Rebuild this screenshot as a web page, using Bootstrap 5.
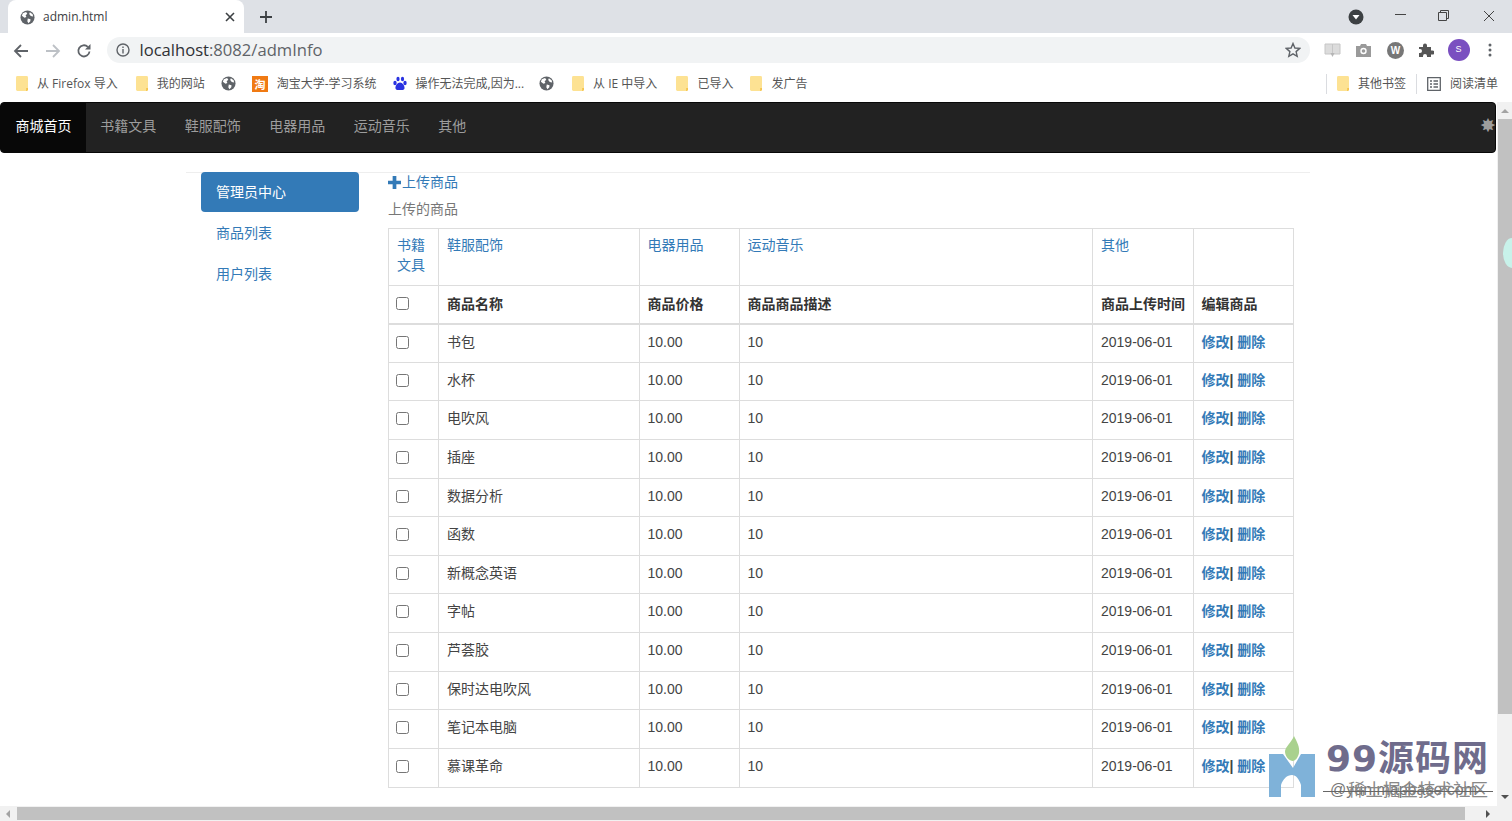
<!DOCTYPE html>
<html lang="zh-CN">
<head>
<meta charset="utf-8">
<title>admin.html</title>
<link rel="stylesheet" href="https://cdn.jsdelivr.net/npm/bootstrap@5.3.0/dist/css/bootstrap.min.css">
<style>
html,body{height:821px;overflow:hidden;background:#fff}
body{font-family:"Liberation Sans","Noto Sans CJK SC",sans-serif;font-size:14px;color:#333;position:relative}
a{text-decoration:none;color:#337ab7}
.tabstrip{height:33px;background:#dee1e6;padding-left:8px}
.browser-tab{width:236px;height:33px;background:#fff;border-radius:8px 8px 0 0;padding:1px 9px 0 12px;font-family:"Open Sans","Noto Sans",sans-serif;font-size:12px;color:#3c4043}
.tab-title{margin-left:8px}
.new-tab{margin-left:15px}
.winbtns{margin-left:auto}
.win-drop{margin-right:15px;margin-top:4px}
.win-btn{width:43.5px;text-align:center}
.win-restore{margin-right:2px}
.win-row{padding-right:1px;margin-top:-3px}
.toolbar{height:34px;padding-left:13px;background:#fff}
.tool-btn{width:31.5px}
.urlbar{width:1203px;height:26px;margin-left:-1px;background:#f1f3f4;border-radius:13px;padding:0 9px;font-family:"Open Sans","Noto Sans",sans-serif;font-size:16.6px;color:#5f6368}
.urlhost{color:#303134}
.url-text{margin-left:10px}
.ext-row{margin-left:14px;gap:14.5px}
.avatar{width:22px;height:22px;border-radius:50%;background:#7a4fc0;color:#fff;font-size:9px;margin-left:-1px}
.dots{margin-left:4px}
.bookmarks{height:35px;padding:0 14px 2px 16px;background:#fff;font-family:"Open Sans","Noto Sans CJK SC",sans-serif;font-size:12px;color:#555;gap:17px}
.bm{gap:9px;white-space:nowrap}
.bm-sep{width:1px;height:20px;background:#dadce0}
.bm-right{margin-left:auto;gap:10px}
.shift-plus1{margin-left:1px}
.shift-plus2{margin-left:2px}
.shift-minus1{margin-left:-1px}
.shift-minus2{margin-left:-2px}
.site-nav{height:51px;width:1496px;background:#222;border:1px solid #080808;border-radius:4px;padding:0;flex-wrap:nowrap;justify-content:flex-start;align-items:flex-start}
.site-nav .nav-link{color:#9d9d9d;padding:0 14.25px;line-height:47px}
.site-nav .brand-link{color:#fff;background:#080808;padding:0 14.5px 2px;line-height:47px;border-radius:3px 0 0 3px}
.gear-mark{position:absolute;right:16px;top:116px;color:#9d9d9d;font-size:19px;line-height:20px}
.page-wrap{width:1124px;margin-left:186px;border-top:1px solid #eee;margin-top:19px;padding:0 15px;height:640px;align-items:flex-start;gap:29px}
.side-col{width:158px;margin-top:-1px}
.side-col .nav-link{color:#337ab7;padding:10px 15px;line-height:20px;border-radius:4px;margin-bottom:1px}
.side-col .nav-link.active{background:#337ab7;color:#fff;height:40px;padding-top:9.500px}
.main-col{width:906px}
.upload-link{margin-top:-1px;height:20px;font-size:14px;line-height:20px}
.upload-plus{margin-right:1px}
.sub-title{color:#777;line-height:20px;margin-top:7px;margin-bottom:9px}
.goods{border-collapse:collapse;width:905px;table-layout:fixed;margin:0;--bs-table-border-color:#ddd;color:#444}
.goods td,.goods th{border:1px solid #ddd;padding:8px;line-height:20px;vertical-align:top;font-weight:400;color:#444}
.goods th{font-weight:700;color:#333;padding-top:8px;height:38px;white-space:nowrap}
.goods .head-row th{border-bottom-width:2px}
.goods .cat-row td{height:57px;padding-top:6px}
.goods tbody td{height:38.65px;padding-top:7px;padding-bottom:0}
.goods tbody td.edit-links{font-weight:700}
.chk{width:13px;height:13px;margin:4px 0 0 -1px;display:block}
.goods th .chk{margin-top:3px}
.footer-bar{position:absolute;left:0;bottom:0;width:1497px;height:15px;background:#f1f1f1}
.h-thumb{position:absolute;left:17px;top:1px;width:1448px;height:13px;background:#c1c1c1}
.v-bar{position:absolute;right:0;top:102px;width:15px;height:719px;background:#f1f1f1}
.v-thumb{position:absolute;left:1px;top:17px;width:14px;height:595px;background:#c1c1c1}
.tri{position:absolute;width:0;height:0;border-style:solid;border-color:transparent}
.tri-up{left:4px;top:7px;border-width:0 4px 4px;border-bottom-color:#a3a3a3}
.tri-down{left:4px;top:693px;border-width:4px 4px 0;border-top-color:#505050}
.tri-left{left:6px;top:4px;border-width:4px 4px 4px 0;border-right-color:#a3a3a3}
.tri-right{right:7px;top:4px;border-width:4px 0 4px 4px;border-left-color:#505050}
.teal-blob{position:absolute;right:-9px;top:136px;width:18px;height:30px;border-radius:50%;background:#c8f2ea}
.wm{position:absolute;left:1268px;top:736px;width:230px;height:66px}
.wm-logo{position:absolute;left:0;top:0}
.wm-title{position:absolute;left:58px;top:0;font-family:"DejaVu Sans","Noto Sans CJK SC",sans-serif;font-weight:700;font-size:36px;line-height:46px;color:#6f6c8c;letter-spacing:1px;white-space:nowrap}
.wm-a,.wm-b{position:absolute;left:62px;top:43px;font-size:16px;line-height:22px;color:#777;white-space:nowrap}
.wm-b{left:80px;font-size:17.500px;color:#888}
.wm-strike{position:absolute;left:55px;top:55px;width:170px;height:1px;background:#666}
</style>
</head>
<body>
<svg width="0" height="0" class="d-block" style="position:absolute">
<defs>
<symbol id="globe" viewBox="0 0 16 16"><circle cx="8" cy="8" r="7.5" fill="#5f6368"/><path d="M3 3.5 6.5 2.2 7.8 4 6 5.5 6.8 7.5 4.8 8.2 2 6ZM8.3 9 11.2 9.8 11 12 9 14 7.8 12ZM10.5 2.5 13.5 4.5 14 7 11.5 6.5 9.8 4.2Z" fill="#fff"/></symbol>
<symbol id="folder" viewBox="0 0 13 16"><path d="M1.5 0H11.5Q13 0 13 1.5V14.5Q13 16 11.5 16H1.5Q0 16 0 14.5V1.5Q0 0 1.5 0Z" fill="#fde293"/><path d="M11 13h2v1.5q0 1.500-1.500 1.500H11Z" fill="#f5c44e"/></symbol>
</defs>
</svg>

<div class="tabstrip d-flex align-items-end">
  <div class="browser-tab d-flex align-items-center">
    <svg width="15" height="15"><use href="#globe"/></svg>
    <span class="tab-title flex-grow-1">admin.html</span>
    <svg width="10" height="10" viewBox="0 0 10 10"><path d="M1 1 9 9M9 1 1 9" stroke="#3c4043" stroke-width="1.6"/></svg>
  </div>
  <div class="new-tab align-self-center"><svg width="14" height="14" viewBox="0 0 14 14"><path d="M7 1V13M1 7H13" stroke="#3c4043" stroke-width="1.8"/></svg></div>
  <div class="winbtns win-row d-flex align-items-center align-self-center">
    <svg class="win-drop" width="16" height="16" viewBox="0 0 16 16"><circle cx="8" cy="8" r="7.5" fill="#3c4043"/><path d="M4.500 6H11.500L8 10.500Z" fill="#fff"/></svg>
    <div class="win-btn"><svg width="11" height="11" viewBox="0 0 11 11"><path d="M0 4.500H11" stroke="#444" stroke-width="1"/></svg></div>
    <div class="win-btn win-restore"><svg width="11" height="11" viewBox="0 0 11 11"><path d="M.5 2.500H8.500V10.500H.5ZM2.500 2.500V.5H10.500V8.500H8.500" fill="none" stroke="#444"/></svg></div>
    <div class="win-btn"><svg width="12" height="12" viewBox="0 0 12 12"><path d="M1 1 11 11M11 1 1 11" stroke="#444"/></svg></div>
  </div>
</div>

<div class="toolbar d-flex align-items-center">
  <div class="tool-btn"><svg width="16" height="16" viewBox="0 0 16 16"><path d="M15 8H2M8 2 2 8l6 6" fill="none" stroke="#5f6368" stroke-width="1.8"/></svg></div>
  <div class="tool-btn"><svg width="16" height="16" viewBox="0 0 16 16"><path d="M1 8H14M8 2l6 6-6 6" fill="none" stroke="#bdc1c6" stroke-width="1.8"/></svg></div>
  <div class="tool-btn"><svg width="16" height="16" viewBox="0 0 16 16"><path d="M13.500 8.500A5.600 5.600 0 1 1 11.800 3.800" fill="none" stroke="#5f6368" stroke-width="1.800"/><path d="M14.500 1V6.500H9Z" fill="#5f6368"/></svg></div>
  <div class="urlbar d-flex align-items-center">
    <svg width="14" height="14" viewBox="0 0 14 14"><circle cx="7" cy="7" r="6" fill="none" stroke="#5f6368" stroke-width="1.400"/><path d="M7 6V10.500M7 3.500V5" stroke="#5f6368" stroke-width="1.400"/></svg>
    <span class="url-text flex-grow-1"><span class="urlhost">localhost</span>:8082/admInfo</span>
    <svg width="16" height="16" viewBox="0 0 16 16"><path d="M8 1.500 9.900 6 14.800 6.400 11.100 9.600 12.200 14.400 8 11.900 3.800 14.400 4.900 9.600 1.200 6.400 6.100 6Z" fill="none" stroke="#5f6368" stroke-width="1.400"/></svg>
  </div>
  <div class="ext-row d-flex align-items-center">
    <svg width="17" height="17" viewBox="0 0 17 17"><path d="M1 2H8.500V12H1ZM8.500 2H16V12H8.500Z" fill="#dcdcdc" stroke="#c6c6c6"/><path d="M6.500 11H10.500L8.500 15Z" fill="#b5b5b5"/></svg>
    <svg width="17" height="17" viewBox="0 0 17 17"><path d="M1 4H5L6 2H11L12 4H16V15H1Z" fill="#9a9a9a"/><circle cx="8.500" cy="9" r="3.200" fill="#fff"/><circle cx="8.500" cy="9" r="1.800" fill="#9a9a9a"/></svg>
    <svg width="17" height="17" viewBox="0 0 17 17"><circle cx="8.500" cy="8.500" r="8.500" fill="#777"/><text x="8.500" y="12" text-anchor="middle" font-size="10" font-weight="700" fill="#fff" font-family="Liberation Sans">W</text></svg>
    <svg width="16" height="16" viewBox="0 0 16 16"><path d="M1 5H5V3.500A2 2 0 0 1 9 3.500V5H13V8.500H14.500A2 2 0 0 1 14.500 12.500H13V15H9V14A2 2 0 0 0 5 14V15H1V11H2A2 2 0 0 0 2 7H1Z" fill="#555"/></svg>
    <div class="avatar d-flex align-items-center justify-content-center">S</div>
    <svg class="dots" width="4" height="14" viewBox="0 0 4 14"><circle cx="2" cy="2" r="1.500" fill="#5f6368"/><circle cx="2" cy="7" r="1.500" fill="#5f6368"/><circle cx="2" cy="12" r="1.500" fill="#5f6368"/></svg>
  </div>
</div>

<div class="bookmarks d-flex align-items-center">
  <div class="bm d-flex align-items-center"><svg width="12" height="15"><use href="#folder"/></svg>从 Firefox 导入</div>
  <div class="bm shift-plus1 d-flex align-items-center"><svg width="12" height="15"><use href="#folder"/></svg>我的网站</div>
  <svg class="shift-minus1" width="15" height="15"><use href="#globe"/></svg>
  <div class="bm shift-minus1 d-flex align-items-center"><svg width="16" height="16" viewBox="0 0 16 16"><rect width="16" height="16" fill="#f07a13"/><text x="8" y="12.500" text-anchor="middle" font-size="11" font-weight="700" fill="#fff" font-family="Noto Sans CJK SC">淘</text></svg>淘宝大学-学习系统</div>
  <div class="bm shift-minus1 d-flex align-items-center"><svg width="14" height="15" viewBox="0 0 14 15"><g fill="#2932e1"><ellipse cx="2" cy="7" rx="1.700" ry="2.200"/><ellipse cx="5" cy="3" rx="1.600" ry="2.200"/><ellipse cx="9.500" cy="3" rx="1.600" ry="2.200"/><ellipse cx="12" cy="7" rx="1.700" ry="2.200"/><path d="M7 6.500C4.500 6.500 2 10 2.500 12.500 3 14.500 5.500 14 7 14S11 14.500 11.500 12.500C12 10 9.500 6.500 7 6.500Z"/></g></svg>操作无法完成,因为...</div>
  <svg class="shift-minus2" width="15" height="15"><use href="#globe"/></svg>
  <div class="bm shift-plus1 d-flex align-items-center"><svg width="12" height="15"><use href="#folder"/></svg>从 IE 中导入</div>
  <div class="bm shift-plus2 d-flex align-items-center"><svg width="12" height="15"><use href="#folder"/></svg>已导入</div>
  <div class="bm d-flex align-items-center"><svg width="12" height="15"><use href="#folder"/></svg>发广告</div>
  <div class="bm-right d-flex align-items-center">
    <span class="bm-sep"></span>
    <div class="bm d-flex align-items-center"><svg width="12" height="15"><use href="#folder"/></svg>其他书签</div>
    <span class="bm-sep"></span>
    <div class="bm d-flex align-items-center"><svg width="14" height="14" viewBox="0 0 14 14"><path d="M.7.700H13.300V13.300H.7ZM3 4H5M6.500 4H11M3 7H5M6.500 7H11M3 10H5M6.500 10H11" fill="none" stroke="#5f6368" stroke-width="1.300"/></svg>阅读清单</div>
  </div>
</div>

<nav class="navbar site-nav">
  <a class="brand-link" href="#">商城首页</a>
  <ul class="navbar-nav flex-row">
    <li class="nav-item"><a class="nav-link" href="#">书籍文具</a></li>
    <li class="nav-item"><a class="nav-link" href="#">鞋服配饰</a></li>
    <li class="nav-item"><a class="nav-link" href="#">电器用品</a></li>
    <li class="nav-item"><a class="nav-link" href="#">运动音乐</a></li>
    <li class="nav-item"><a class="nav-link" href="#">其他</a></li>
  </ul>
</nav>
<span class="gear-mark">✸</span>

<div class="page-wrap d-flex">
  <ul class="nav flex-column side-col">
    <li class="nav-item"><a class="nav-link active" href="#">管理员中心</a></li>
    <li class="nav-item"><a class="nav-link" href="#">商品列表</a></li>
    <li class="nav-item"><a class="nav-link" href="#">用户列表</a></li>
  </ul>
  <div class="main-col">
    <div class="upload-link d-flex align-items-center"><svg class="upload-plus" width="13" height="13" viewBox="0 0 14 14"><path d="M5 0H9V5H14V9H9V14H5V9H0V5H5Z" fill="#337ab7"/></svg><a href="#">上传商品</a></div>
    <div class="sub-title">上传的商品</div>
    <table class="table goods">
      <colgroup><col style="width:50px"><col style="width:200.500px"><col style="width:100px"><col style="width:353.500px"><col style="width:100.500px"><col style="width:100.500px"></colgroup>
      <thead>
        <tr class="cat-row"><td><a href="#">书籍文具</a></td><td><a href="#">鞋服配饰</a></td><td><a href="#">电器用品</a></td><td><a href="#">运动音乐</a></td><td><a href="#">其他</a></td><td></td></tr>
        <tr class="head-row"><th><input class="chk" type="checkbox"></th><th>商品名称</th><th>商品价格</th><th>商品商品描述</th><th>商品上传时间</th><th>编辑商品</th></tr>
      </thead>
      <tbody id="rows">
        <tr><td><input class="chk" type="checkbox"></td><td>书包</td><td>10.00</td><td>10</td><td>2019-06-01</td><td class="edit-links"><a href="#">修改</a>| <a href="#">删除</a></td></tr>
        <tr><td><input class="chk" type="checkbox"></td><td>水杯</td><td>10.00</td><td>10</td><td>2019-06-01</td><td class="edit-links"><a href="#">修改</a>| <a href="#">删除</a></td></tr>
        <tr><td><input class="chk" type="checkbox"></td><td>电吹风</td><td>10.00</td><td>10</td><td>2019-06-01</td><td class="edit-links"><a href="#">修改</a>| <a href="#">删除</a></td></tr>
        <tr><td><input class="chk" type="checkbox"></td><td>插座</td><td>10.00</td><td>10</td><td>2019-06-01</td><td class="edit-links"><a href="#">修改</a>| <a href="#">删除</a></td></tr>
        <tr><td><input class="chk" type="checkbox"></td><td>数据分析</td><td>10.00</td><td>10</td><td>2019-06-01</td><td class="edit-links"><a href="#">修改</a>| <a href="#">删除</a></td></tr>
        <tr><td><input class="chk" type="checkbox"></td><td>函数</td><td>10.00</td><td>10</td><td>2019-06-01</td><td class="edit-links"><a href="#">修改</a>| <a href="#">删除</a></td></tr>
        <tr><td><input class="chk" type="checkbox"></td><td>新概念英语</td><td>10.00</td><td>10</td><td>2019-06-01</td><td class="edit-links"><a href="#">修改</a>| <a href="#">删除</a></td></tr>
        <tr><td><input class="chk" type="checkbox"></td><td>字帖</td><td>10.00</td><td>10</td><td>2019-06-01</td><td class="edit-links"><a href="#">修改</a>| <a href="#">删除</a></td></tr>
        <tr><td><input class="chk" type="checkbox"></td><td>芦荟胶</td><td>10.00</td><td>10</td><td>2019-06-01</td><td class="edit-links"><a href="#">修改</a>| <a href="#">删除</a></td></tr>
        <tr><td><input class="chk" type="checkbox"></td><td>保时达电吹风</td><td>10.00</td><td>10</td><td>2019-06-01</td><td class="edit-links"><a href="#">修改</a>| <a href="#">删除</a></td></tr>
        <tr><td><input class="chk" type="checkbox"></td><td>笔记本电脑</td><td>10.00</td><td>10</td><td>2019-06-01</td><td class="edit-links"><a href="#">修改</a>| <a href="#">删除</a></td></tr>
        <tr><td><input class="chk" type="checkbox"></td><td>慕课革命</td><td>10.00</td><td>10</td><td>2019-06-01</td><td class="edit-links"><a href="#">修改</a>| <a href="#">删除</a></td></tr>
      </tbody>
    </table>
  </div>
</div>

<div class="v-bar"><div class="v-thumb"></div><span class="tri tri-up"></span><span class="tri tri-down"></span><span class="teal-blob"></span></div>
<div class="footer-bar"><div class="h-thumb"></div><span class="tri tri-left"></span><span class="tri tri-right"></span></div>

<div class="wm">
  <svg class="wm-logo" width="50" height="63" viewBox="0 0 50 63"><path d="M26 0C29 6 32 11 31 17 30 22 27 25 24.500 25 20 24 17 20 17 15 18 10 23 7 26 0Z" fill="#a9d18e"/><path d="M1 18H15L25 32 33 18H47V61H33V49C31 43 28 39 24 39 19 39 15 43 13 49V61H1Z" fill="#7fb2d9"/></svg>
  <div class="wm-title">99源码网</div>
  <div class="wm-a">@yun.mapbase.com</div>
  <div class="wm-b">稀土掘金技术社区</div>
  <div class="wm-strike"></div>
</div>
</body>
</html>
